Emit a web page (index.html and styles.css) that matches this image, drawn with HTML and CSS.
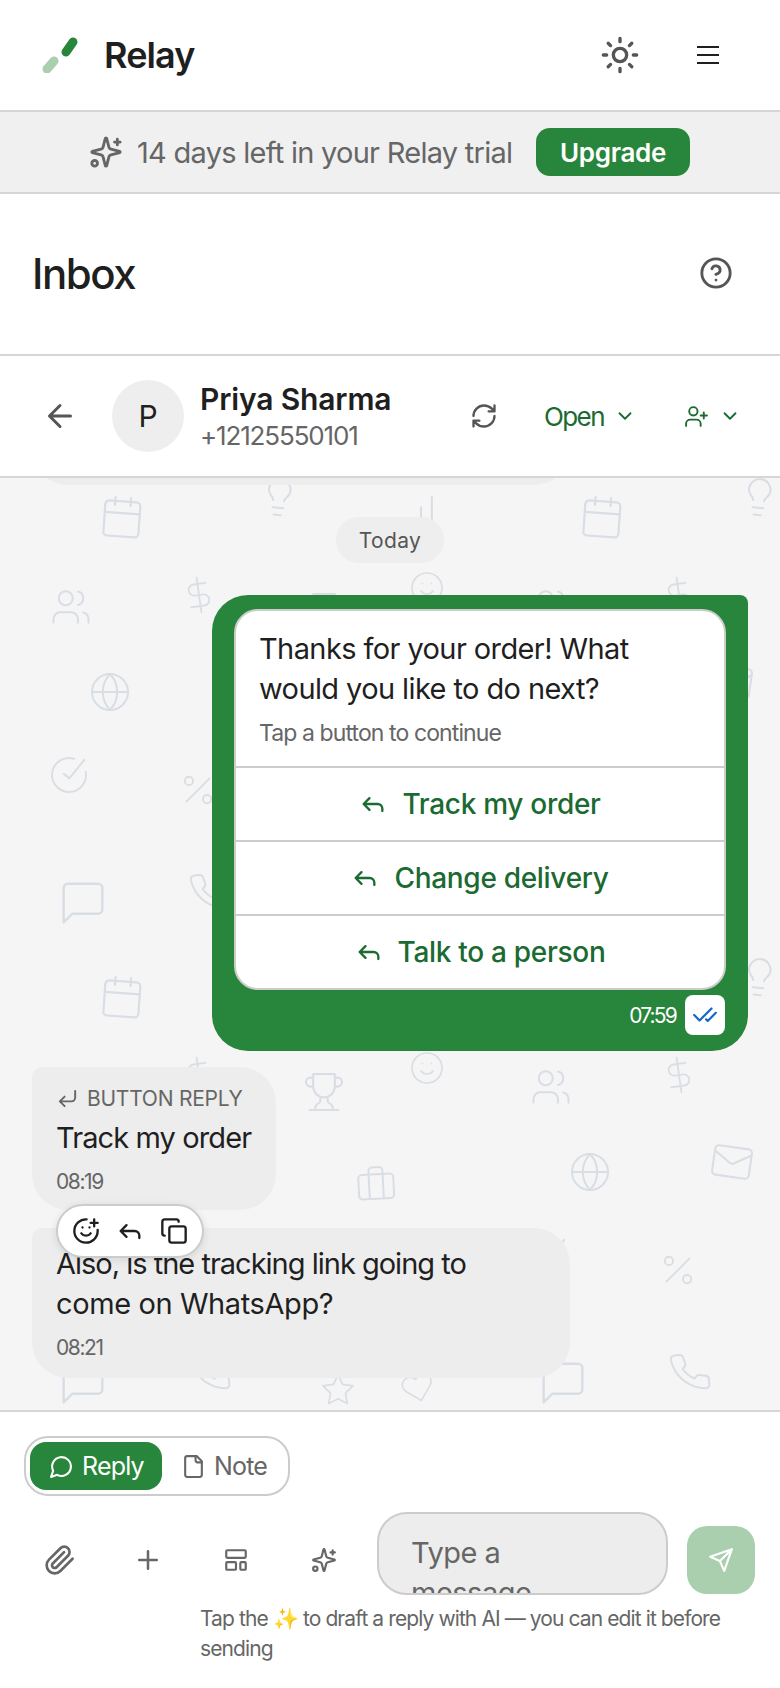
FILE: index.html
```html
<!DOCTYPE html>
<html lang="en">
<head>
    <meta charset="UTF-8">
    <title>Relay Inbox</title>
    <link rel="stylesheet" href="styles.css">
</head>
<body>

    <!-- icon sprite -->
    <svg class="sprite" xmlns="http://www.w3.org/2000/svg">
        <symbol id="i-calendar" viewBox="0 0 24 24"><path d="M8 2v4M16 2v4"/><rect x="3" y="4" width="18" height="18" rx="2"/><path d="M3 10h18"/></symbol>
        <symbol id="i-bulb" viewBox="0 0 24 24"><path d="M15 14c.2-1 .7-1.7 1.5-2.5 1-.9 1.5-2.2 1.5-3.5A6 6 0 0 0 6 8c0 1 .2 2.2 1.5 3.5.7.7 1.3 1.5 1.5 2.5"/><path d="M9 18h6M10 22h4"/></symbol>
        <symbol id="i-bars" viewBox="0 0 24 24"><path d="M12 20V10M18 20V4M6 20v-4"/></symbol>
        <symbol id="i-users" viewBox="0 0 24 24"><path d="M16 21v-2a4 4 0 0 0-4-4H6a4 4 0 0 0-4 4v2"/><circle cx="9" cy="7" r="4"/><path d="M22 21v-2a4 4 0 0 0-3-3.87M16 3.13a4 4 0 0 1 0 7.75"/></symbol>
        <symbol id="i-dollar" viewBox="0 0 24 24"><path d="M12 1v22M17 5H9.5a3.5 3.5 0 0 0 0 7h5a3.5 3.5 0 0 1 0 7H6"/></symbol>
        <symbol id="i-smile" viewBox="0 0 24 24"><circle cx="12" cy="12" r="10"/><path d="M8 14s1.5 2 4 2 4-2 4-2M9 9h.01M15 9h.01"/></symbol>
        <symbol id="i-trophy" viewBox="0 0 24 24"><path d="M6 9H4.5a2.5 2.5 0 0 1 0-5H6M18 9h1.5a2.5 2.5 0 0 0 0-5H18M4 22h16M10 14.66V17c0 .55-.47.98-.97 1.21C7.85 18.75 7 20.24 7 22M14 14.66V17c0 .55.47.98.97 1.21C16.15 18.75 17 20.24 17 22"/><path d="M18 2H6v7a6 6 0 0 0 12 0V2Z"/></symbol>
        <symbol id="i-globe" viewBox="0 0 24 24"><circle cx="12" cy="12" r="10"/><path d="M12 2a14.5 14.5 0 0 0 0 20 14.5 14.5 0 0 0 0-20M2 12h20"/></symbol>
        <symbol id="i-mail" viewBox="0 0 24 24"><rect x="2" y="4" width="20" height="16" rx="2"/><path d="m22 7-8.97 5.7a1.94 1.94 0 0 1-2.06 0L2 7"/></symbol>
        <symbol id="i-case" viewBox="0 0 24 24"><rect x="2" y="7" width="20" height="14" rx="2"/><path d="M16 21V5a2 2 0 0 0-2-2h-4a2 2 0 0 0-2 2v16"/></symbol>
        <symbol id="i-check" viewBox="0 0 24 24"><path d="M22 11.08V12a10 10 0 1 1-5.93-9.14M9 11l3 3L22 4"/></symbol>
        <symbol id="i-percent" viewBox="0 0 24 24"><path d="M19 5 5 19"/><circle cx="6.5" cy="6.5" r="2.5"/><circle cx="17.5" cy="17.5" r="2.5"/></symbol>
        <symbol id="i-phone" viewBox="0 0 24 24"><path d="M22 16.92v3a2 2 0 0 1-2.18 2 19.79 19.79 0 0 1-8.63-3.07 19.5 19.5 0 0 1-6-6 19.79 19.79 0 0 1-3.07-8.67A2 2 0 0 1 4.11 2h3a2 2 0 0 1 2 1.72 12.84 12.84 0 0 0 .7 2.81 2 2 0 0 1-.45 2.11L8.09 9.91a16 16 0 0 0 6 6l1.27-1.27a2 2 0 0 1 2.11-.45 12.84 12.84 0 0 0 2.81.7A2 2 0 0 1 22 16.92z"/></symbol>
        <symbol id="i-chat" viewBox="0 0 24 24"><path d="M21 15a2 2 0 0 1-2 2H7l-4 4V5a2 2 0 0 1 2-2h14a2 2 0 0 1 2 2z"/></symbol>
        <symbol id="i-star" viewBox="0 0 24 24"><path d="M12 2l3.09 6.26L22 9.27l-5 4.87 1.18 6.88L12 17.77l-6.18 3.25L7 14.14 2 9.27l6.91-1.01z"/></symbol>
        <symbol id="i-heart" viewBox="0 0 24 24"><path d="M20.84 4.61a5.5 5.5 0 0 0-7.78 0L12 5.67l-1.06-1.06a5.5 5.5 0 0 0-7.78 7.78l1.06 1.06L12 21.23l7.78-7.78 1.06-1.06a5.5 5.5 0 0 0 0-7.78z"/></symbol>

        <symbol id="i-sun" viewBox="0 0 24 24"><circle cx="12" cy="12" r="4"/><path d="M12 2v2M12 20v2M4.93 4.93l1.41 1.41M17.66 17.66l1.41 1.41M2 12h2M20 12h2M6.34 17.66l-1.41 1.41M19.07 4.93l-1.41 1.41"/></symbol>
        <symbol id="i-sparkles" viewBox="0 0 24 24"><path d="M9.937 15.5A2 2 0 0 0 8.5 14.063l-6.135-1.582a.5.5 0 0 1 0-.962L8.5 9.936A2 2 0 0 0 9.937 8.5l1.582-6.135a.5.5 0 0 1 .963 0L14.063 8.5A2 2 0 0 0 15.5 9.937l6.135 1.581a.5.5 0 0 1 0 .964L15.5 14.063a2 2 0 0 0-1.437 1.437l-1.582 6.135a.5.5 0 0 1-.963 0z"/><path d="M20 3v4M22 5h-4"/><circle cx="4" cy="20" r="2"/></symbol>
        <symbol id="i-help" viewBox="0 0 24 24"><circle cx="12" cy="12" r="10"/><path d="M9.09 9a3 3 0 0 1 5.83 1c0 2-3 3-3 3M12 17h.01"/></symbol>
        <symbol id="i-back" viewBox="0 0 24 24"><path d="m12 19-7-7 7-7M19 12H5"/></symbol>
        <symbol id="i-refresh" viewBox="0 0 24 24"><path d="M3 12a9 9 0 0 1 9-9 9.75 9.75 0 0 1 6.74 2.74L21 8M21 3v5h-5M21 12a9 9 0 0 1-9 9 9.75 9.75 0 0 1-6.74-2.74L3 16M8 16H3v5"/></symbol>
        <symbol id="i-chevron" viewBox="0 0 24 24"><path d="m6 9 6 6 6-6"/></symbol>
        <symbol id="i-user-plus" viewBox="0 0 24 24"><path d="M16 21v-2a4 4 0 0 0-4-4H6a4 4 0 0 0-4 4v2"/><circle cx="9" cy="7" r="4"/><path d="M19 8v6M22 11h-6"/></symbol>
        <symbol id="i-reply" viewBox="0 0 24 24"><path d="M9 17l-5-5 5-5M20 18v-2a4 4 0 0 0-4-4H4"/></symbol>
        <symbol id="i-return" viewBox="0 0 24 24"><path d="M9 10l-5 5 5 5M20 4v7a4 4 0 0 1-4 4H4"/></symbol>
        <symbol id="i-double-check" viewBox="0 0 24 24"><path d="M18 6 7 17l-5-5M22 10l-7.5 7.5L13 16"/></symbol>
        <symbol id="i-smile-plus" viewBox="0 0 24 24"><path d="M22 11v1a10 10 0 1 1-9.5-10M8 14s1.5 2 4 2 4-2 4-2M9 9h.01M15 9h.01M16 5h6M19 2v6"/></symbol>
        <symbol id="i-copy" viewBox="0 0 24 24"><rect x="8" y="8" width="14" height="14" rx="2"/><path d="M4 16c-1.1 0-2-.9-2-2V4c0-1.1.9-2 2-2h10c1.1 0 2 .9 2 2"/></symbol>
        <symbol id="i-bubble" viewBox="0 0 24 24"><path d="M7.9 20A9 9 0 1 0 4 16.1L2 22Z"/></symbol>
        <symbol id="i-file" viewBox="0 0 24 24"><path d="M15 2H6a2 2 0 0 0-2 2v16a2 2 0 0 0 2 2h12a2 2 0 0 0 2-2V7Z"/><path d="M14 2v4a2 2 0 0 0 2 2h4"/></symbol>
        <symbol id="i-clip" viewBox="0 0 24 24"><path d="m21.44 11.05-9.19 9.19a6 6 0 0 1-8.49-8.49l8.57-8.57A4 4 0 1 1 18 8.84l-8.59 8.57a2 2 0 0 1-2.83-2.83l8.49-8.48"/></symbol>
        <symbol id="i-plus" viewBox="0 0 24 24"><path d="M5 12h14M12 5v14"/></symbol>
        <symbol id="i-template" viewBox="0 0 24 24"><rect x="3" y="3" width="18" height="7" rx="1"/><rect x="3" y="14" width="9" height="7" rx="1"/><rect x="16" y="14" width="5" height="7" rx="1"/></symbol>
        <symbol id="i-send" viewBox="0 0 24 24"><path d="m22 2-7 20-4-9-9-4ZM22 2 11 13"/></symbol>
    </svg>

    <header class="topbar">
        <div class="brand">
            <svg class="logo" width="38" height="36" viewBox="0 0 38 36">
                <line class="logo-dark" x1="25" y1="15" x2="32" y2="5"/>
                <line class="logo-light" x1="6" y1="32" x2="13" y2="24"/>
            </svg>
            <span class="brand-name">Relay</span>
        </div>
        <div class="topbar-actions">
            <svg class="icon icon-sun"><use href="#i-sun"/></svg>
            <div class="hamburger"><span></span><span></span><span></span></div>
        </div>
    </header>

    <div class="trial-banner">
        <svg class="icon icon-trial"><use href="#i-sparkles"/></svg>
        <span class="trial-text">14 days left in your Relay trial</span>
        <button class="upgrade-btn">Upgrade</button>
    </div>

    <div class="page-title">
        <h1>Inbox</h1>
        <svg class="icon icon-help"><use href="#i-help"/></svg>
    </div>

    <div class="contact-bar">
        <svg class="icon icon-back"><use href="#i-back"/></svg>
        <div class="avatar">P</div>
        <div class="contact-info">
            <div class="contact-name">Priya Sharma</div>
            <div class="contact-phone">+12125550101</div>
        </div>
        <svg class="icon icon-refresh"><use href="#i-refresh"/></svg>
        <div class="status-select">
            <span>Open</span>
            <svg class="icon icon-chevron"><use href="#i-chevron"/></svg>
        </div>
        <div class="assign-select">
            <svg class="icon icon-assign"><use href="#i-user-plus"/></svg>
            <svg class="icon icon-chevron"><use href="#i-chevron"/></svg>
        </div>
    </div>

    <main class="chat">
        <!-- doodle wallpaper, one 480px tile -->
        <svg class="chat-wallpaper" width="780" height="932">
            <defs>
                <pattern id="doodles" x="0" y="-8" width="480" height="480" patternUnits="userSpaceOnUse">
                    <use href="#i-calendar" width="24" height="24" transform="translate(122 47) rotate(4) scale(1.95) translate(-12 -12)"/>
                    <use href="#i-bulb" width="24" height="24" transform="translate(279 27) rotate(6) scale(1.8) translate(-12 -12)"/>
                    <use href="#i-bars" width="24" height="24" transform="translate(421 41) scale(1.8) translate(-12 -12)"/>
                    <use href="#i-users" width="24" height="24" transform="translate(71 137) scale(1.75) translate(-12 -12)"/>
                    <use href="#i-dollar" width="24" height="24" transform="translate(199 125) rotate(-8) scale(1.6) translate(-12 -12)"/>
                    <use href="#i-smile" width="24" height="24" transform="translate(427 118) scale(1.5) translate(-12 -12)"/>
                    <use href="#i-trophy" width="24" height="24" transform="translate(324 142) scale(1.8) translate(-12 -12)"/>
                    <use href="#i-globe" width="24" height="24" transform="translate(110 222) scale(1.8) translate(-12 -12)"/>
                    <use href="#i-mail" width="24" height="24" transform="translate(252 212) rotate(8) scale(1.85) translate(-12 -12)"/>
                    <use href="#i-case" width="24" height="24" transform="translate(376 233) rotate(-3) scale(1.75) translate(-12 -12)"/>
                    <use href="#i-check" width="24" height="24" transform="translate(69 305) rotate(-6) scale(1.7) translate(-12 -12)"/>
                    <use href="#i-percent" width="24" height="24" transform="translate(198 320) scale(1.65) translate(-12 -12)"/>
                    <use href="#i-phone" width="24" height="24" transform="translate(210 422) rotate(-6) scale(1.8) translate(-12 -12)"/>
                    <use href="#i-chat" width="24" height="24" transform="translate(83 433) scale(2.15) translate(-12 -12)"/>
                    <use href="#i-star" width="24" height="24" transform="translate(338 440) scale(1.5) translate(-12 -12)"/>
                    <use href="#i-heart" width="24" height="24" transform="translate(418 438) rotate(-15) scale(1.4) translate(-12 -12)"/>
                </pattern>
            </defs>
            <rect class="wallpaper-fill" width="780" height="932" fill="url(#doodles)"/>
        </svg>

        <div class="messages">
            <div class="msg msg-in msg-older"></div>

            <div class="date-pill">Today</div>

            <div class="msg msg-out">
                <div class="template-card">
                    <div class="template-body">
                        <div class="template-text">Thanks for your order! What would you like to do next?</div>
                        <div class="template-footer">Tap a button to continue</div>
                    </div>
                    <div class="template-btn"><svg class="icon icon-btn"><use href="#i-reply"/></svg>Track my order</div>
                    <div class="template-btn"><svg class="icon icon-btn"><use href="#i-reply"/></svg>Change delivery</div>
                    <div class="template-btn"><svg class="icon icon-btn"><use href="#i-reply"/></svg>Talk to a person</div>
                </div>
                <div class="msg-meta-out">
                    <span class="msg-time-out">07:59</span>
                    <span class="read-tick"><svg class="icon icon-tick"><use href="#i-double-check"/></svg></span>
                </div>
            </div>

            <div class="msg msg-in msg-reply">
                <div class="reply-label"><svg class="icon icon-return"><use href="#i-return"/></svg>BUTTON REPLY</div>
                <div class="msg-text">Track my order</div>
                <div class="msg-time">08:19</div>
                <div class="msg-actions">
                    <svg class="icon icon-action"><use href="#i-smile-plus"/></svg>
                    <svg class="icon icon-action"><use href="#i-reply"/></svg>
                    <svg class="icon icon-action"><use href="#i-copy"/></svg>
                </div>
            </div>

            <div class="msg msg-in msg-wide">
                <div class="msg-text"><span class="tight">Also, is the tracking link going to</span> come on WhatsApp?</div>
                <div class="msg-time">08:21</div>
            </div>
        </div>
    </main>

    <footer class="composer">
        <div class="mode-toggle">
            <div class="mode-btn mode-active"><svg class="icon icon-mode"><use href="#i-bubble"/></svg>Reply</div>
            <div class="mode-btn"><svg class="icon icon-mode"><use href="#i-file"/></svg>Note</div>
        </div>
        <div class="composer-row">
            <div class="tool-btn"><svg class="icon icon-clip"><use href="#i-clip"/></svg></div>
            <div class="tool-btn"><svg class="icon icon-plus"><use href="#i-plus"/></svg></div>
            <div class="tool-btn"><svg class="icon icon-tool"><use href="#i-template"/></svg></div>
            <div class="tool-btn"><svg class="icon icon-tool"><use href="#i-sparkles"/></svg></div>
            <div class="composer-input"><div>Type a message</div></div>
            <div class="send-btn"><svg class="icon icon-send"><use href="#i-send"/></svg></div>
        </div>
        <p class="composer-hint">Tap the ✨ to draft a reply with AI — you can edit it before sending</p>
    </footer>

</body>
</html>
```

FILE: styles.css
```css
* { box-sizing: border-box; }
html, body { margin: 0; padding: 0; }
body { width: 780px; height: 1688px; display: flex; flex-direction: column; overflow: hidden; background: #fff; color: #1f1f1f; font-family: Inter, "Liberation Sans", sans-serif; }

.sprite { display: none; }
.icon { display: block; flex: none; fill: none; stroke: currentColor; stroke-width: 2; stroke-linecap: round; stroke-linejoin: round; }

/* top bar */
.topbar { height: 112px; flex: none; display: flex; align-items: center; justify-content: space-between; padding: 0 61px 0 41px; border-bottom: 2px solid #d6d6d6; }
.brand { display: flex; align-items: center; gap: 25px; }
.logo line { stroke-width: 9; stroke-linecap: round; }
.logo-dark { stroke: #27863b; }
.logo-light { stroke: #a9cfae; }
.brand-name { font-size: 36px; font-weight: 600; letter-spacing: -.9px; }
.topbar-actions { display: flex; align-items: center; gap: 57px; }
.icon-sun { width: 40px; height: 40px; color: #555; }
.hamburger { width: 22px; display: flex; flex-direction: column; gap: 6px; }
.hamburger span { display: block; height: 2px; background: #1f1f1f; }

/* trial banner */
.trial-banner { height: 82px; flex: none; display: flex; align-items: center; padding-left: 89px; background: #f0f0f0; border-bottom: 2px solid #d6d6d6; color: #666; }
.icon-trial { width: 34px; height: 34px; margin-right: 14px; }
.trial-text { width: 399px; font-size: 29px; letter-spacing: -.73px; white-space: nowrap; }
.upgrade-btn { width: 154px; height: 48px; border: 0; border-radius: 14px; background: #27863b; color: #fff; font-family: inherit; font-size: 26px; font-weight: 600; letter-spacing: -.3px; }

/* page title */
.page-title { height: 162px; flex: none; display: flex; align-items: center; justify-content: space-between; padding: 0 47px 2px 32px; border-bottom: 2px solid #d6d6d6; }
.page-title h1 { margin: 0; font-size: 42px; font-weight: 500; letter-spacing: -1.5px; }
.icon-help { width: 34px; height: 34px; color: #555; }

/* contact */
.contact-bar { height: 122px; flex: none; display: flex; align-items: center; padding-left: 42px; border-bottom: 2px solid #d6d6d6; }
.icon-back { width: 36px; height: 36px; color: #555; margin-right: 34px; }
.avatar { width: 72px; height: 72px; border-radius: 50%; background: #eee; display: flex; align-items: center; justify-content: center; font-size: 30px; margin-right: 16px; }
.contact-info { width: 270px; }
.contact-name { font-size: 30px; font-weight: 600; letter-spacing: -.15px; line-height: 40px; }
.contact-phone { font-size: 26px; color: #666; letter-spacing: -1.15px; line-height: 34px; }
.icon-refresh { width: 28px; height: 28px; color: #555; margin-right: 46px; }
.status-select { display: flex; align-items: center; color: #1b6a31; font-size: 26px; letter-spacing: -1.6px; width: 90px; }
.icon-chevron { width: 22px; height: 22px; margin-left: 10px; }
.assign-select { display: flex; align-items: center; color: #1b6a31; margin-left: 50px; }
.icon-assign { width: 25px; height: 25px; stroke-width: 1.8; }

/* chat */
.chat { flex: 1; min-height: 0; position: relative; overflow: hidden; background: #f5f5f5; }
.chat-wallpaper { position: absolute; left: 0; top: 0; fill: none; stroke: #d9dee5; stroke-width: 1.15; stroke-linecap: round; stroke-linejoin: round; }
.wallpaper-fill { stroke: none; }
.messages { position: relative; height: 100%; display: flex; flex-direction: column; justify-content: flex-end; padding: 0 32px 32px; }
.msg { flex: none; border-radius: 10px 36px 36px 36px; }
.msg-in { background: #ededed; align-self: flex-start; }
.msg-older { width: 538px; height: 140px; margin-bottom: 32px; }
.date-pill { flex: none; align-self: center; width: 108px; height: 46px; margin-bottom: 32px; border-radius: 23px; background: #eee; color: #555; display: flex; align-items: center; justify-content: center; font-size: 21px; letter-spacing: .4px; }

.msg-out { align-self: flex-end; width: 536px; height: 456px; padding: 14px 22px 0; background: #27863b; border-radius: 36px 8px 36px 36px; margin-bottom: 16px; }
.template-card { background: #fff; border: 2px solid #ccc; border-radius: 24px; overflow: hidden; }
.template-body { height: 155px; padding: 18px 23px 0; }
.template-text { font-size: 29px; line-height: 40px; letter-spacing: -.6px; }
.template-footer { font-size: 23px; line-height: 32px; color: #666; margin-top: 8px; letter-spacing: -.9px; }
.template-btn { height: 74px; display: flex; align-items: center; justify-content: center; gap: 15px; border-top: 2px solid #ccc; color: #1b6a31; font-size: 28px; font-weight: 500; letter-spacing: -.3px; }
.icon-btn { width: 28px; height: 28px; }
.msg-meta-out { display: flex; align-items: center; justify-content: flex-end; gap: 9px; margin-top: 5px; padding-right: 1px; }
.msg-time-out { color: #fff; font-size: 21px; letter-spacing: -1.8px; }
.read-tick { width: 40px; height: 40px; border-radius: 8px; background: #fff; display: flex; align-items: center; justify-content: center; color: #1466c8; }
.icon-tick { width: 26px; height: 26px; }

.msg-reply { width: 244px; height: 143px; padding: 17px 0 0 24px; margin-bottom: 18px; position: relative; }
.reply-label { display: flex; align-items: center; gap: 8px; height: 28px; color: #666; font-size: 21px; letter-spacing: -.25px; white-space: nowrap; }
.icon-return { width: 23px; height: 23px; }
.msg-text { font-size: 29px; line-height: 40px; letter-spacing: -.4px; }
.msg-text .tight { letter-spacing: -1px; }
.msg-reply .msg-text { margin-top: 6px; white-space: nowrap; letter-spacing: -.9px; }
.msg-time { font-size: 21px; color: #666; letter-spacing: -1.4px; margin-top: 11px; line-height: 26px; }
.msg-actions { position: absolute; left: 24px; top: 137px; width: 148px; height: 54px; z-index: 2; display: flex; align-items: center; justify-content: center; gap: 16px; background: #fff; border: 2px solid #ccc; border-radius: 27px; box-shadow: 0 2px 8px rgba(0, 0, 0, .1); color: #1f1f1f; }
.icon-action { width: 28px; height: 28px; }

.msg-wide { width: 538px; height: 150px; padding: 16px 30px 0 24px; }

/* composer */
.composer { height: 278px; flex: none; border-top: 2px solid #d6d6d6; padding: 24px 0 0; }
.mode-toggle { width: 266px; height: 60px; margin-left: 24px; padding: 4px; display: flex; align-items: stretch; border: 2px solid #ccc; border-radius: 24px; }
.mode-btn { display: flex; align-items: center; gap: 8px; padding-left: 19px; font-size: 25px; letter-spacing: -.8px; color: #666; flex: 1; border-radius: 16px; }
.mode-active { flex: none; width: 132px; background: #27863b; color: #fff; }
.icon-mode { width: 25px; height: 25px; }
.composer-row { display: flex; align-items: flex-end; padding-left: 16px; margin-top: 16px; height: 83px; }
.tool-btn { width: 88px; height: 68px; display: flex; align-items: center; justify-content: center; color: #666; margin-bottom: 1px; }
.icon-clip { width: 32px; height: 32px; }
.icon-plus { width: 30px; height: 30px; }
.icon-tool { width: 26px; height: 26px; }
.composer-input { width: 291px; height: 83px; margin-left: 9px; padding: 19px 32px 0; overflow: hidden; background: #ededed; border: 2px solid #ccc; border-radius: 30px; color: #666; font-size: 29px; line-height: 40px; letter-spacing: -.5px; }
.composer-input div { width: 110px; }
.send-btn { width: 68px; height: 68px; margin: 0 0 1px 19px; border-radius: 20px; background: #a9cfae; display: flex; align-items: center; justify-content: center; color: #fff; }
.icon-send { width: 26px; height: 26px; }
.composer-hint { margin: 9px 40px 0 200px; font-size: 21px; line-height: 30px; color: #666; letter-spacing: -.9px; }
```
